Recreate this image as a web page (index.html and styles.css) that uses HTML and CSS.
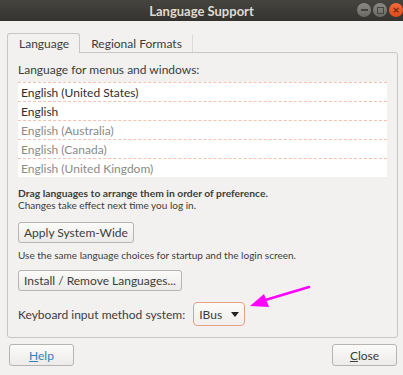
FILE: index.html
```html
<!DOCTYPE html>
<html lang="en">
<head>
    <meta charset="UTF-8">
    <title>Language Support</title>
    <link rel="stylesheet" href="styles.css">
</head>
<body>
    <!-- Title Bar -->
    <header class="titlebar">
        <span class="title">Language Support</span>
        <div class="win-buttons">
            <span class="win-btn min"><i></i></span>
            <span class="win-btn max"><i></i></span>
            <span class="win-btn close">&times;</span>
        </div>
    </header>

    <div class="content">
        <!-- Tabs -->
        <div class="tabs">
            <div class="tab active">Language</div>
            <div class="tab">Regional Formats</div>
        </div>

        <div class="panel">
            <p class="label">Language for menus and windows:</p>

            <ul class="lang-list">
                <li class="on">English (United States)</li>
                <li class="on">English</li>
                <li>English (Australia)</li>
                <li>English (Canada)</li>
                <li>English (United Kingdom)</li>
            </ul>

            <p class="hint"><b>Drag languages to arrange them in order of preference.</b><br>Changes take effect next time you log in.</p>

            <button class="btn apply">Apply System-Wide</button>
            <p class="hint single">Use the same language choices for startup and the login screen.</p>

            <button class="btn install">Install / Remove Languages...</button>

            <div class="im-row">
                <span>Keyboard input method system:</span>
                <div class="combo">IBus <span class="caret"></span></div>
            </div>
        </div>

        <!-- Dialog Buttons -->
        <div class="dialog-buttons">
            <button class="btn wide help"><u>H</u>elp</button>
            <button class="btn wide"><u>C</u>lose</button>
        </div>
    </div>

    <!-- Annotation arrow -->
    <svg class="arrow" width="403" height="375" viewBox="0 0 403 375">
        <line x1="309" y1="287" x2="262" y2="301" stroke="#ff00ff" stroke-width="2.5" stroke-linecap="round"/>
        <polygon points="250,306 264,294 269,307" fill="#ff00ff"/>
    </svg>
</body>
</html>
```

FILE: styles.css
```css
/* General Styles */
body {
    margin: 0;
    width: 403px;
    height: 375px;
    overflow: hidden;
    position: relative;
    background-color: #f2f1f0;
    color: #3c3c3c;
    font-family: Lato, "Noto Sans", sans-serif;
    font-size: 12px;
}

.titlebar {
    height: 21px;
    background: linear-gradient(#45443f, #34332f);
    display: flex;
    align-items: center;
    justify-content: center;
    position: relative;
}

.title {
    color: #dfdbd2;
    font-weight: bold;
    font-size: 13px;
}

.win-buttons {
    position: absolute;
    right: 0;
    top: 3px;
    display: flex;
    gap: 2px;
}

.win-btn {
    width: 14px;
    height: 14px;
    border-radius: 50%;
    background: linear-gradient(#8a8984, #6a6964);
    display: flex;
    align-items: center;
    justify-content: center;
}

.win-btn.min i {
    width: 7px;
    height: 2px;
    background: #45443f;
}

.win-btn.max i {
    width: 5px;
    height: 5px;
    border: 1px solid #45443f;
}

.win-btn.close {
    background: linear-gradient(#f26b3a, #df4a1c);
    color: #6b2a10;
    font-size: 12px;
    line-height: 1;
    font-weight: bold;
}

.content {
    padding: 11px 5px 0 7px;
}

/* Tabs */
.tabs {
    display: flex;
    height: 20px;
}

.tab {
    padding: 0 10px 0 11px;
    color: #3c3c3c;
    border-right: 1px solid #dcdad5;
    margin-top: 3px;
    line-height: 17px;
}

.tab.active {
    margin-top: 0;
    line-height: 20px;
    border: 1px solid #c8c6c1;
    border-bottom: none;
    border-radius: 3px 3px 0 0;
    background: #f2f1f0;
    position: relative;
    top: 1px;
}

.panel {
    border: 1px solid #c8c6c1;
    border-radius: 0 3px 3px 3px;
    height: 286px;
    box-sizing: border-box;
    padding: 8px 10px 0 10px;
}

.label {
    margin: 0 0 4px 0;
    line-height: 17px;
}

.lang-list {
    list-style: none;
    margin: 0;
    padding: 0;
    background: #fff;
}

.lang-list li {
    height: 18px;
    line-height: 19px;
    border-top: 1px dashed #f6c2ae;
    padding-left: 3px;
    color: #8a8a8a;
}

.lang-list li.on {
    color: #2e2e2e;
}

.hint {
    margin: 10px 0 0 0;
    font-size: 10px;
    line-height: 12px;
}

.hint b {
    font-size: 10.3px;
}

.hint.single {
    margin: 6px 0 0 0;
}

.btn {
    font-family: inherit;
    font-size: 12px;
    color: #3c3c3c;
    height: 21px;
    padding: 0 5px;
    border: 1px solid #b6b4af;
    border-radius: 3px;
    background: linear-gradient(#fbfbfa, #ecebe9);
    display: block;
}

.btn.apply {
    margin-top: 11px;
}

.btn.install {
    margin-top: 9px;
}

.im-row {
    display: flex;
    align-items: center;
    gap: 8px;
    margin-top: 11px;
}

.combo {
    height: 24px;
    box-sizing: border-box;
    border: 1px solid #e8a084;
    border-radius: 4px;
    background: linear-gradient(#fcfbfa, #f0efed);
    display: flex;
    align-items: center;
    padding: 0 5px;
    gap: 9px;
    color: #3c3c3c;
}

.caret {
    width: 0;
    height: 0;
    border-left: 4px solid transparent;
    border-right: 4px solid transparent;
    border-top: 5px solid #222;
}

.dialog-buttons {
    display: flex;
    justify-content: space-between;
    padding: 6px 1px 0 2px;
}

.btn.wide {
    width: 65px;
    height: 22px;
}

.btn.help {
    color: #2f82b8;
}

/* Annotation overlay */
.arrow {
    position: absolute;
    top: 0;
    left: 0;
    pointer-events: none;
}
```
